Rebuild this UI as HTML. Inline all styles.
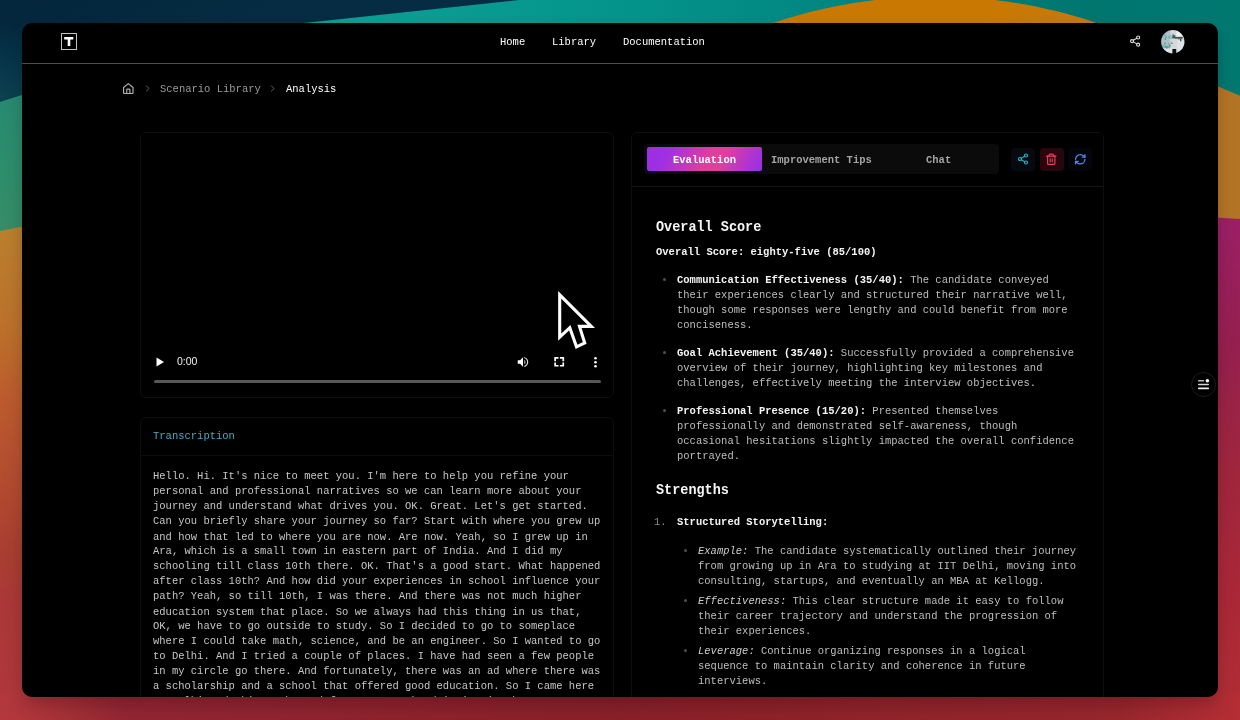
<!DOCTYPE html>
<html>
<head>
<meta charset="utf-8">
<title>Analysis</title>
<style>
*{box-sizing:border-box;margin:0;padding:0}
html,body{width:1240px;height:720px;overflow:hidden;background:#0a8f8c}
body{position:relative;font-family:"Liberation Mono",monospace;font-size:10.5px;line-height:15px;color:#bebebe}
#bg{position:absolute;left:0;top:0;width:1240px;height:720px}
#win{position:absolute;left:22px;top:23px;width:1196px;height:673.500px;background:#000;border-radius:10px;overflow:hidden;box-shadow:0 9px 18px -2px rgba(0,0,0,.24)}
#pg{position:absolute;left:-22px;top:-23px;width:1240px;height:720px}
#pg *{position:absolute}
.t{white-space:pre;font-size:10.5px;line-height:13.393px;margin-top:1.2px;transform:scaleY(1.12);transform-origin:0 0;will-change:transform}
.w{color:#fff}
.b{font-weight:bold;color:#f4f4f4}
.i{font-style:italic;color:#cecece}
#pg .t span{position:static}
.card{border:1px solid #0e0e0e;border-radius:6px;background:#000}
.h{font-size:13.5px;font-weight:bold;color:#f6f6f6;line-height:18px;margin-top:.4px;white-space:pre;transform:scaleY(1.1);transform-origin:0 0;will-change:transform}
.dot{width:3px;height:3px;border-radius:50%;background:#505050}
</style>
</head>
<body>
<svg id="bg" viewBox="0 0 1240 720">
  <defs>
    <linearGradient id="gl" gradientUnits="userSpaceOnUse" x1="0" y1="228" x2="0" y2="720">
      <stop offset="0" stop-color="#b97f2e"/>
      <stop offset="0.207" stop-color="#bb702a"/>
      <stop offset="0.35" stop-color="#bb5a2e"/>
      <stop offset="0.553" stop-color="#b04830"/>
      <stop offset="0.65" stop-color="#a83f30"/>
      <stop offset="0.756" stop-color="#aa3837"/>
      <stop offset="0.92" stop-color="#ae373a"/>
      <stop offset="1" stop-color="#b2383c"/>
    </linearGradient>
    <linearGradient id="gr" gradientUnits="userSpaceOnUse" x1="0" y1="217" x2="0" y2="720">
      <stop offset="0" stop-color="#9c1f66"/>
      <stop offset="0.25" stop-color="#95204f"/>
      <stop offset="0.5" stop-color="#a0263d"/>
      <stop offset="0.75" stop-color="#aa2837"/>
      <stop offset="1" stop-color="#b22e34"/>
    </linearGradient>
    <linearGradient id="gb" x1="0" y1="0" x2="1" y2="0">
      <stop offset="0" stop-color="#b2383c"/>
      <stop offset="0.03" stop-color="#ae353a"/>
      <stop offset="0.1" stop-color="#932632"/>
      <stop offset="0.5" stop-color="#8a2029"/>
      <stop offset="0.9" stop-color="#98262d"/>
      <stop offset="0.97" stop-color="#ae2c33"/>
      <stop offset="1" stop-color="#b42e34"/>
    </linearGradient>
    <linearGradient id="gt" x1="0" y1="0" x2="1" y2="0">
      <stop offset="0.3" stop-color="#0c9e96"/>
      <stop offset="0.5" stop-color="#04948b"/>
      <stop offset="0.62" stop-color="#028a84"/>
      <stop offset="0.88" stop-color="#00766f"/>
      <stop offset="1" stop-color="#007870"/>
    </linearGradient>
    <linearGradient id="gn" gradientUnits="userSpaceOnUse" x1="0" y1="0" x2="120" y2="260">
      <stop offset="0" stop-color="#03263b"/>
      <stop offset="0.42" stop-color="#052c42"/>
    </linearGradient>
    <linearGradient id="gn2" gradientUnits="userSpaceOnUse" x1="0" y1="23" x2="0" y2="102">
      <stop offset="0" stop-color="#04283d"/>
      <stop offset="0.5" stop-color="#07354a"/>
      <stop offset="1" stop-color="#0c424f"/>
    </linearGradient>
    <linearGradient id="gg" gradientUnits="userSpaceOnUse" x1="0" y1="95" x2="0" y2="231">
      <stop offset="0" stop-color="#278a70"/>
      <stop offset="0.6" stop-color="#2e8d6b"/>
      <stop offset="1" stop-color="#378c66"/>
    </linearGradient>
    <linearGradient id="go" gradientUnits="userSpaceOnUse" x1="1000" y1="0" x2="1240" y2="0">
      <stop offset="0" stop-color="#c97802"/>
      <stop offset="0.85" stop-color="#c07a20"/>
    </linearGradient>
  </defs>
  <rect x="0" y="0" width="1240" height="720" fill="url(#gt)"/>
  <path d="M0 0H519L304 23L22 95L0 102Z" fill="url(#gn)"/>
  <path d="M0 23H40V89L22 95L0 102Z" fill="url(#gn2)"/>
  <path d="M0 102L22 95L40 89V224L0 231Z" fill="url(#gg)"/>
  <path d="M0 231L40 223V720H0Z" fill="url(#gl)"/>
  <clipPath id="cd"><rect x="0" y="0" width="1218" height="720"/></clipPath><circle cx="935" cy="507" r="510.500" fill="url(#go)" clip-path="url(#cd)"/>
  <path d="M1217 86L1240 95.700V230H1217Z" fill="#b47426"/>
  <path d="M1200 216.500L1240 219V720H1200Z" fill="url(#gr)"/>
  <rect x="0" y="695" width="1240" height="25" fill="url(#gb)"/>
</svg>

<div id="win"><div id="pg">
  <!-- NAV -->
  <div style="left:22px;top:63px;width:1196px;height:1px;background:#4c4c4c"></div>
  <div style="left:60.700px;top:33.100px;width:16.500px;height:17px;border:1.300px solid #c4c4c4;border-radius:0.500px"></div>
  <svg style="left:64px;top:37px" width="10" height="10" viewBox="0 0 10 10"><path d="M0.200 0.100H9.300V2.500H6.300V8.900H3.700V2.500H0.200Z" fill="#fff"/></svg>
  <div class="t w" style="left:500px;top:33.5px">Home</div>
  <div class="t w" style="left:552.4px;top:33.5px">Library</div>
  <div class="t w" style="left:623.3px;top:33.5px">Documentation</div>
  <!-- share icon -->
  <svg style="left:1129.200px;top:35.200px" width="12.200" height="12.200" viewBox="0 0 24 24" fill="none" stroke="#dcdcdc" stroke-width="2.2" stroke-linecap="round" stroke-linejoin="round"><circle cx="18" cy="5" r="3"/><circle cx="6" cy="12" r="3"/><circle cx="18" cy="19" r="3"/><line x1="8.59" y1="13.51" x2="15.42" y2="17.49"/><line x1="15.41" y1="6.51" x2="8.59" y2="10.49"/></svg>
  <!-- avatar -->
  <svg style="left:1161px;top:29.500px" width="24" height="24" viewBox="0 0 24 24">
    <defs><clipPath id="ac"><circle cx="11.800" cy="11.800" r="11.700"/></clipPath><filter id="ab"><feGaussianBlur stdDeviation="0.400"/></filter></defs>
    <g clip-path="url(#ac)"><g filter="url(#ab)">
      <rect x="-2" y="-2" width="28" height="28" fill="#d3d9db"/>
      <rect x="-2" y="-2" width="11.300" height="21" fill="#a9c1c8"/>
      <rect x="15.500" y="1" width="5" height="5" fill="#f1f3f4"/>
      <rect x="2" y="18.500" width="9.500" height="6" fill="#e2e4e5"/>
      <rect x="16" y="10" width="8" height="10" fill="#dbe3e6"/>
      <g fill="#23906f" opacity=".85">
        <rect x="3.300" y="4.700" width="1.200" height="1.200"/><rect x="4.300" y="6.600" width="1.400" height="1.300"/><rect x="3.700" y="8.400" width="1.300" height="1.500"/>
        <rect x="7.300" y="6.600" width="1.200" height="1.200"/><rect x="8.600" y="7.600" width="1" height="1"/><rect x="10.500" y="6.800" width="1.300" height="1.700"/>
        <rect x="11.600" y="3.800" width="1.200" height="2"/><rect x="1.400" y="6.600" width="1" height="1"/>
        <rect x="3.300" y="12.800" width="1.300" height="1.600"/><rect x="7.300" y="13.600" width="1.200" height="1"/><rect x="8.200" y="14.800" width="1.400" height="1.800"/>
        <rect x="3.500" y="15.600" width="1.200" height="2.400"/><rect x="5.500" y="15.800" width="1.200" height="2"/><rect x="1.500" y="15.400" width="1" height="1.200"/>
        <rect x="17.200" y="8.400" width="1.300" height="1.200"/><rect x="20.300" y="7.400" width="1" height="1"/>
      </g>
      <rect x="9.200" y="5.300" width="1.200" height="1.200" fill="#2ea3b4"/>
      <rect x="5.200" y="17.500" width="1.200" height="1" fill="#3a6ad0"/><rect x="7.300" y="16.600" width="1.200" height="1" fill="#3a6ad0"/>
      <rect x="9.800" y="12.500" width="1.800" height="1.400" fill="#8a7a3a"/>
      <rect x="11.400" y="5.200" width="3" height="3.200" fill="#50575a"/>
      <rect x="14" y="7.100" width="7.600" height="1.500" fill="#3a4144"/>
      <rect x="19" y="8.300" width="1.400" height="3" fill="#4a5154"/>
      <rect x="11.400" y="19" width="3.800" height="6" fill="#070707"/>
    </g></g>
  </svg>

  <!-- BREADCRUMB -->
  <svg style="left:122.200px;top:81.600px" width="12.600" height="12.600" viewBox="0 0 24 24" fill="none" stroke="#b2b2b2" stroke-width="2.200" stroke-linecap="round" stroke-linejoin="round"><path d="M3 10.5 12 3l9 7.500V20a2 2 0 0 1-2 2H5a2 2 0 0 1-2-2z"/><path d="M9 22v-7a1.500 1.500 0 0 1 1.500-1.500h3A1.500 1.500 0 0 1 15 15v7"/></svg>
  <svg style="left:143px;top:84px" width="9" height="9" viewBox="0 0 24 24" fill="none" stroke="#6a6a6a" stroke-width="2.4" stroke-linecap="round" stroke-linejoin="round"><path d="m9 5 7 7-7 7"/></svg>
  <div class="t" style="left:160.3px;top:80.5px;color:#9c9c9c">Scenario Library</div>
  <svg style="left:268px;top:84px" width="9" height="9" viewBox="0 0 24 24" fill="none" stroke="#6a6a6a" stroke-width="2.4" stroke-linecap="round" stroke-linejoin="round"><path d="m9 5 7 7-7 7"/></svg>
  <div class="t w" style="left:286.2px;top:80.5px">Analysis</div>

  <!-- VIDEO CARD -->
  <div class="card" style="left:140px;top:132px;width:474px;height:266px;background:#000"></div>
  <svg style="left:155.5px;top:357px" width="9" height="10" viewBox="0 0 9 10"><path d="M0.5 0.6 8 5 0.500 9.400Z" fill="#fff"/></svg>
  <div style="left:177px;top:354px;font-family:'Liberation Sans',sans-serif;font-size:10.5px;line-height:15px;color:#f0f0f0;will-change:transform">0:00</div>
  <!-- volume -->
  <svg style="left:516px;top:355px" width="14" height="14" viewBox="0 0 24 24"><path d="M3 9v6h4l5 5V4L7 9z" fill="#fff"/><path d="M14 7.970v8.050A4.500 4.500 0 0 0 16.500 12 4.500 4.500 0 0 0 14 7.970z" fill="#aaa"/><path d="M14 3.230v2.060c2.890.86 5 3.540 5 6.710s-2.110 5.850-5 6.710v2.060c4.010-.91 7-4.490 7-8.770s-2.990-7.860-7-8.770z" fill="#ddd"/></svg>
  <!-- fullscreen -->
  <svg style="left:550px;top:352px" width="20" height="20" viewBox="550 352 20 20" fill="none" stroke="#fff" stroke-width="1.700"><path d="M555.150 361.200V357.950H558.500M559.900 357.950H563.250V361.200M563.250 362.500V365.750H559.900M558.500 365.750H555.150V362.500"/></svg>
  <!-- dots -->
  <svg style="left:593px;top:356px" width="5" height="12" viewBox="0 0 5 12" fill="#fff"><circle cx="2.500" cy="2.200" r="1.300"/><circle cx="2.500" cy="6.200" r="1.300"/><circle cx="2.500" cy="10.200" r="1.300"/></svg>
  <div style="left:153.500px;top:379.600px;width:447.700px;height:3.400px;border-radius:2px;background:#575757"></div>

  <!-- TRANSCRIPTION CARD -->
  <div class="card" style="left:140px;top:417px;width:474px;height:300px;border-bottom-left-radius:0;border-bottom-right-radius:0"></div>
  <div class="t" style="left:153px;top:428.300px;color:#48a9c4">Transcription</div>
  <div style="left:141px;top:454.500px;width:472px;height:1px;background:#0d0d0d"></div>
  <div class="t" style="left:153px;top:468.300px;color:#c6c6c6">Hello. Hi. It's nice to meet you. I'm here to help you refine your
personal and professional narratives so we can learn more about your
journey and understand what drives you. OK. Great. Let's get started.
Can you briefly share your journey so far? Start with where you grew up
and how that led to where you are now. Are now. Yeah, so I grew up in
Ara, which is a small town in eastern part of India. And I did my
schooling till class 10th there. OK. That's a good start. What happened
after class 10th? And how did your experiences in school influence your
path? Yeah, so till 10th, I was there. And there was not much higher
education system that place. So we always had this thing in us that,
OK, we have to go outside to study. So I decided to go to someplace
where I could take math, science, and be an engineer. So I wanted to go
to Delhi. And I tried a couple of places. I have had seen a few people
in my circle go there. And fortunately, there was an ad where there was
a scholarship and a school that offered good education. So I came here
to Delhi and things changed for me. I took admission in the IIT</div>

  <!-- RIGHT CARD -->
  <div class="card" style="left:631px;top:132px;width:473px;height:600px;border-bottom-left-radius:0;border-bottom-right-radius:0"></div>
  <div style="left:632px;top:185.500px;width:471px;height:1px;background:#141414"></div>
  <div style="left:644px;top:144px;width:355px;height:29.500px;border-radius:4px;background:#0b0b0b"></div>
  <div style="left:647px;top:147.300px;width:115px;height:23.700px;border-radius:2px;background:linear-gradient(115deg,#9a2fe6 0%,#9f30e2 18%,#df3e9e 52%,#e03f9c 64%,#a832da 90%,#9a2fe6 100%)"></div>
  <div class="t" style="left:673px;top:151.500px;font-weight:bold;color:#fff">Evaluation</div>
  <div class="t" style="left:771px;top:151.500px;font-weight:bold;color:#a4a4a4">Improvement Tips</div>
  <div class="t" style="left:925.800px;top:151.500px;font-weight:bold;color:#a4a4a4">Chat</div>
  <!-- action buttons -->
  <div style="left:1011.400px;top:147.500px;width:23.500px;height:23px;border-radius:4px;background:#06090d"></div>
  <svg style="left:1017px;top:153px" width="12" height="12" viewBox="0 0 24 24" fill="none" stroke="#25b4c6" stroke-width="2.300" stroke-linecap="round" stroke-linejoin="round"><circle cx="18" cy="5" r="3"/><circle cx="6" cy="12" r="3"/><circle cx="18" cy="19" r="3"/><line x1="8.590" y1="13.510" x2="15.420" y2="17.490"/><line x1="15.410" y1="6.510" x2="8.590" y2="10.490"/></svg>
  <div style="left:1039.600px;top:147.500px;width:24px;height:23px;border-radius:4px;background:#27070d"></div>
  <svg style="left:1045.300px;top:153px" width="12.500" height="12.500" viewBox="0 0 24 24" fill="none" stroke="#e2405c" stroke-width="2.300" stroke-linecap="round" stroke-linejoin="round"><path d="M3 6h18"/><path d="M19 6v14a2 2 0 0 1-2 2H7a2 2 0 0 1-2-2V6"/><path d="M8 6V4a2 2 0 0 1 2-2h4a2 2 0 0 1 2 2v2"/><line x1="10" y1="11" x2="10" y2="17"/><line x1="14" y1="11" x2="14" y2="17"/></svg>
  <div style="left:1068px;top:147.500px;width:24px;height:23px;border-radius:4px;background:#03050a"></div>
  <svg style="left:1073.500px;top:153px" width="12.500" height="12.500" viewBox="0 0 24 24" fill="none" stroke="#4a8cf0" stroke-width="2.400" stroke-linecap="round" stroke-linejoin="round"><path d="M3 12a9 9 0 0 1 9-9 9.750 9.750 0 0 1 6.740 2.740L21 8"/><path d="M21 3v5h-5"/><path d="M21 12a9 9 0 0 1-9 9 9.750 9.750 0 0 1-6.740-2.740L3 16"/><path d="M8 16H3v5"/></svg>

  <!-- evaluation text -->
  <div class="h" style="left:656px;top:217.500px">Overall Score</div>
  <div class="t b" style="left:656px;top:243.700px">Overall Score: eighty-five (85/100)</div>

  <div class="dot" style="left:663px;top:278px"></div>
  <div class="t" style="left:677px;top:272px"><span class="b">Communication Effectiveness (35/40):</span> The candidate conveyed
their experiences clearly and structured their narrative well,
though some responses were lengthy and could benefit from more
conciseness.</div>
  <div class="dot" style="left:663px;top:351px"></div>
  <div class="t" style="left:677px;top:345px"><span class="b">Goal Achievement (35/40):</span> Successfully provided a comprehensive
overview of their journey, highlighting key milestones and
challenges, effectively meeting the interview objectives.</div>
  <div class="dot" style="left:663px;top:409px"></div>
  <div class="t" style="left:677px;top:403px"><span class="b">Professional Presence (15/20):</span> Presented themselves
professionally and demonstrated self-awareness, though
occasional hesitations slightly impacted the overall confidence
portrayed.</div>

  <div class="h" style="left:656px;top:481px">Strengths</div>
  <div class="t" style="left:654.400px;top:514px;color:#8a8a8a">1.</div>
  <div class="t b" style="left:677px;top:514px">Structured Storytelling:</div>

  <div class="dot" style="left:684px;top:549px"></div>
  <div class="t" style="left:698px;top:543px"><span class="i">Example:</span> The candidate systematically outlined their journey
from growing up in Ara to studying at IIT Delhi, moving into
consulting, startups, and eventually an MBA at Kellogg.</div>
  <div class="dot" style="left:684px;top:599px"></div>
  <div class="t" style="left:698px;top:593px"><span class="i">Effectiveness:</span> This clear structure made it easy to follow
their career trajectory and understand the progression of
their experiences.</div>
  <div class="dot" style="left:684px;top:649px"></div>
  <div class="t" style="left:698px;top:643px"><span class="i">Leverage:</span> Continue organizing responses in a logical
sequence to maintain clarity and coherence in future
interviews.</div>

  <!-- floating button -->
  <div style="left:1191px;top:372px;width:25px;height:25px;border-radius:50%;border:1px solid #1c1c1c;background:#000"></div>
  <svg style="left:1197px;top:378px" width="14" height="13" viewBox="0 0 14 13"><rect x="1" y="2.100" width="6.200" height="1.500" rx=".7" fill="#bdbdbd"/><circle cx="10.400" cy="2.700" r="1.800" fill="#fff"/><rect x="1" y="5.800" width="11" height="1.500" rx=".7" fill="#d8d8d8"/><rect x="1" y="9.500" width="11" height="1.700" rx=".7" fill="#f0f0f0"/></svg>

  <!-- cursor -->
  <svg style="left:550px;top:284px" width="52" height="72" viewBox="550 284 52 72"><path d="M559.700 294.800V337.200L569.800 327.700 576.500 346.800 584.700 343 579.500 326.400 591.300 326.400Z" fill="#000" stroke="#fff" stroke-width="3.100" stroke-linejoin="miter"/></svg>
</div></div>
</body>
</html>
